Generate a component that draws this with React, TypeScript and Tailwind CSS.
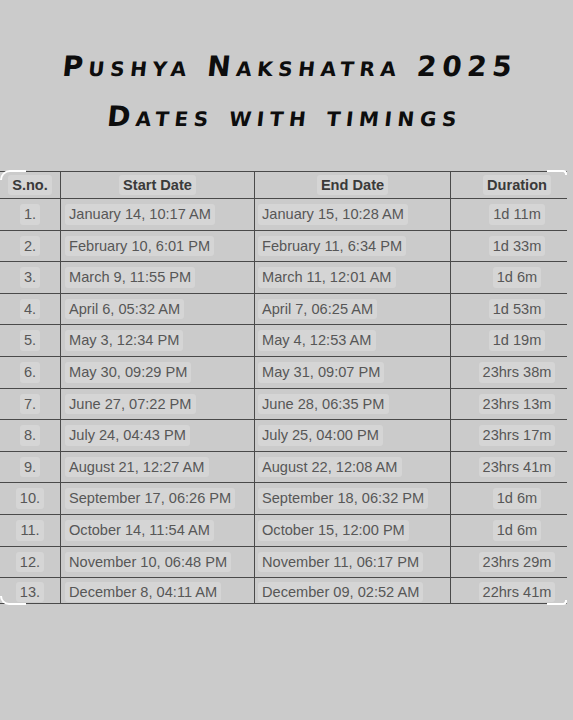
import React from "react";

const rows: [string, string, string, string][] = [
  ["1.", "January 14, 10:17 AM", "January 15, 10:28 AM", "1d 11m"],
  ["2.", "February 10, 6:01 PM", "February 11, 6:34 PM", "1d 33m"],
  ["3.", "March 9, 11:55 PM", "March 11, 12:01 AM", "1d 6m"],
  ["4.", "April 6, 05:32 AM", "April 7, 06:25 AM", "1d 53m"],
  ["5.", "May 3, 12:34 PM", "May 4, 12:53 AM", "1d 19m"],
  ["6.", "May 30, 09:29 PM", "May 31, 09:07 PM", "23hrs 38m"],
  ["7.", "June 27, 07:22 PM", "June 28, 06:35 PM", "23hrs 13m"],
  ["8.", "July 24, 04:43 PM", "July 25, 04:00 PM", "23hrs 17m"],
  ["9.", "August 21, 12:27 AM", "August 22, 12:08 AM", "23hrs 41m"],
  ["10.", "September 17, 06:26 PM", "September 18, 06:32 PM", "1d 6m"],
  ["11.", "October 14, 11:54 AM", "October 15, 12:00 PM", "1d 6m"],
  ["12.", "November 10, 06:48 PM", "November 11, 06:17 PM", "23hrs 29m"],
  ["13.", "December 8, 04:11 AM", "December 09, 02:52 AM", "22hrs 41m"],
];

function Chip({ children, bold }: { children: React.ReactNode; bold?: boolean }) {
  return (
    <span
      className={
        "rounded-[3px] bg-[#d5d5d5] px-[4px] py-[3px] leading-none " +
        (bold ? "font-bold text-[#3a3a3a]" : "text-[#575757]")
      }
    >
      {children}
    </span>
  );
}

export default function App() {
  return (
    <div
      className="relative w-[573px] h-[720px] overflow-hidden bg-[#cbcbcb]"
      style={{ fontFamily: '"Liberation Sans", Arial, sans-serif' }}
    >
      <div
        className="flex flex-col items-center pt-[42px] pl-[6px] text-[#0d0d0d] font-bold tracking-[0.2em] [font-variant:small-caps] text-[28px] leading-[50px] -skew-x-6"
        style={{ fontFamily: '"DejaVu Sans", sans-serif' }}
      >
        <div>Pushya Nakshatra 2025</div>
        <div>Dates with timings</div>
      </div>

      <div className="relative mt-[29px] w-[567px] text-[14.6px]">
        <div className="grid grid-cols-[61px_194px_196px_116px] border-t-[1.5px] border-[#4a4a4a]">
          {["S.no.", "Start Date", "End Date", "Duration"].map((h, i) => (
            <div
              key={h}
              className={
                "h-[27px] flex items-center justify-center border-b-[1.5px] border-[#4a4a4a] " +
                (i < 3 ? "border-r-[1.5px] " : "pl-4 ")
              }
            >
              <Chip bold>{h}</Chip>
            </div>
          ))}
          {rows.map((r, ri) => {
            const last = ri === rows.length - 1;
            const h = last ? "h-[26px] items-end pb-[1px] " : "h-[31.6px] items-center ";
            return (
              <React.Fragment key={ri}>
                <div className={h + "flex justify-center border-r-[1.5px] border-b-[1.5px] border-[#4a4a4a]"}>
                  <Chip>{r[0]}</Chip>
                </div>
                <div className={h + "flex justify-start pl-[4px] border-r-[1.5px] border-b-[1.5px] border-[#4a4a4a]"}>
                  <Chip>{r[1]}</Chip>
                </div>
                <div className={h + "flex justify-start pl-[3px] border-r-[1.5px] border-b-[1.5px] border-[#4a4a4a]"}>
                  <Chip>{r[2]}</Chip>
                </div>
                <div className={h + "flex justify-center pl-4 border-b-[1.5px] border-[#4a4a4a]"}>
                  <Chip>{r[3]}</Chip>
                </div>
              </React.Fragment>
            );
          })}
        </div>
        {/* white frame corners */}
        <div className="absolute left-0 top-[-1px] w-[26px] h-[10px] border-t-2 border-l-2 border-white rounded-tl-[24px]" />
        <div className="absolute right-0 top-[-1px] w-[20px] h-[5px] border-t-2 border-r-2 border-white rounded-tr-[4px]" />
        <div className="absolute left-0 bottom-[-1px] w-[26px] h-[9px] border-b-2 border-l-2 border-white rounded-bl-[24px]" />
        <div className="absolute right-0 bottom-[-1px] w-[20px] h-[5px] border-b-2 border-r-2 border-white rounded-br-[4px]" />
      </div>
    </div>
  );
}
